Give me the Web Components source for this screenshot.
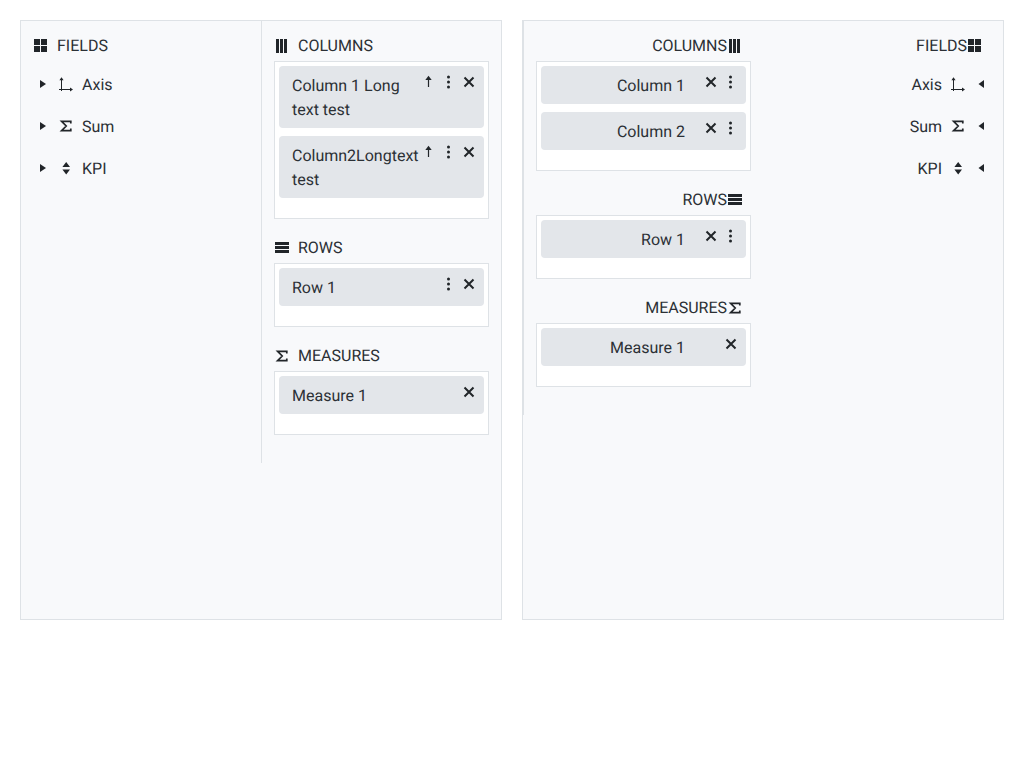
<!DOCTYPE html>
<html>
<head>
<meta charset="utf-8">
<title>Pivot</title>
<style>
  body { margin: 20px; font: 16px/24px Roboto, "Liberation Sans", sans-serif; color: #2b3035; background: #fff; text-rendering: geometricPrecision; }
</style>
</head>
<body>
<pivot-page>
  <pivot-board>
    <field-list title="FIELDS">
      <field-item icon="axis">Axis</field-item>
      <field-item icon="sum">Sum</field-item>
      <field-item icon="kpi">KPI</field-item>
    </field-list>
    <div slot="zones">
      <drop-zone title="COLUMNS" icon="columns">
        <pivot-chip buttons="up,menu,close">Column 1 Long text test</pivot-chip>
        <pivot-chip buttons="up,menu,close">Column2Longtext test</pivot-chip>
      </drop-zone>
      <drop-zone title="ROWS" icon="rows">
        <pivot-chip buttons="menu,close">Row 1</pivot-chip>
      </drop-zone>
      <drop-zone title="MEASURES" icon="sum">
        <pivot-chip buttons="close">Measure 1</pivot-chip>
      </drop-zone>
    </div>
  </pivot-board>
  <pivot-board flip>
    <field-list title="FIELDS" flip>
      <field-item icon="axis" flip>Axis</field-item>
      <field-item icon="sum" flip>Sum</field-item>
      <field-item icon="kpi" flip>KPI</field-item>
    </field-list>
    <div slot="zones">
      <drop-zone title="COLUMNS" icon="columns" flip>
        <pivot-chip buttons="close,menu" flip>Column 1</pivot-chip>
        <pivot-chip buttons="close,menu" flip>Column 2</pivot-chip>
      </drop-zone>
      <drop-zone title="ROWS" icon="rows" flip>
        <pivot-chip buttons="close,menu" flip>Row 1</pivot-chip>
      </drop-zone>
      <drop-zone title="MEASURES" icon="sum" flip>
        <pivot-chip buttons="close" flip>Measure 1</pivot-chip>
      </drop-zone>
    </div>
  </pivot-board>
</pivot-page>
<script>
// every icon sits in a 16x16 box
const ICONS = {
  fields: '<path d="M1 1h6v6H1zM8 1h6v6H8zM1 8h6v6H1zM8 8h6v6H8z"/>',
  columns: '<path d="M2 1h3v14H2zM6 1h3v14H6zM10 1h3v14h-3z"/>',
  rows: '<path d="M1 2h14v3H1zM1 6h14v3H1zM1 10h14v3H1z"/>',
  axis: '<path d="M3.5 3v12M1 13.5h12" fill="none" stroke="currentColor"/><path d="M3.5 1.2L1.4 4.2h4.2zM15 13.5l-3-2.1v4.2z"/>',
  sum: '<path d="M12.8 5.6V3.4H3.6L8.2 8l-4.6 4.6h9.2v-2.2" fill="none" stroke="currentColor" stroke-width="1.7"/>',
  kpi: '<path d="M8.2 2L12 7H4.4zM4.4 9.5H12L8.2 14.5z"/>',
  right: '<path d="M5 4l6 4-6 4z"/>',
  left: '<path d="M11 4L5.5 8l5.5 4z"/>',
  up: '<path d="M7.5 5v8" fill="none" stroke="currentColor" stroke-width="1.2"/><path d="M7.5 1.7L4.3 6h6.4z"/>',
  menu: '<circle cx="7.5" cy="3" r="1.5"/><circle cx="7.5" cy="8" r="1.5"/><circle cx="7.5" cy="13" r="1.5"/>',
  close: '<path d="M3.5 3.5l9 9M12.5 3.5l-9 9" fill="none" stroke="currentColor" stroke-width="2"/>'
};

class PivotIcon extends HTMLElement {
  constructor() {
    super();
    this.attachShadow({mode: "open"}).innerHTML =
      "<style>:host{display:block;width:16px;height:16px;flex:none;color:#212529}svg{display:block}</style>" +
      '<svg width="16" height="16" viewBox="0 0 16 16" fill="currentColor">' + ICONS[this.getAttribute("name")] + "</svg>";
  }
}

class PivotPage extends HTMLElement {
  constructor() {
    super();
    this.attachShadow({mode: "open"}).innerHTML =
      "<style>:host{display:flex;gap:20px;width:984px}</style><slot></slot>";
  }
}

class PivotBoard extends HTMLElement {
  constructor() {
    super();
    this.attachShadow({mode: "open"}).innerHTML = `<style>
      :host { display: flex; flex: 1 1 0; min-width: 0; height: 600px; box-sizing: border-box; border: 1px solid #dee2e6; background: #f8f9fb; align-items: flex-start; }
      :host([flip]) { flex-direction: row-reverse; }
      .zones { display: block; width: 240px; box-sizing: border-box; border-left: 1px solid #dee2e6; padding: 12px; }
      ::slotted(field-list) { width: 240px; }
    </style><slot></slot><div class="zones"><slot name="zones"></slot></div>`;
  }
}

class FieldList extends HTMLElement {
  constructor() {
    super();
    this.attachShadow({mode: "open"}).innerHTML = `<style>
      :host { display: block; box-sizing: border-box; padding-top: 12px; }
      .head { display: flex; align-items: center; box-sizing: border-box; height: 24px; padding: 2px 0 0 12px; gap: 8px; }
      :host([flip]) .head { flex-direction: row-reverse; gap: 0; padding: 2px 20px 0 0; }
      .items { display: flex; flex-direction: column; gap: 18px; margin-top: 15px; }
    </style>
    <div class="head"><pivot-icon name="fields"></pivot-icon><span>${this.getAttribute("title")}</span></div>
    <div class="items"><slot></slot></div>`;
    this.removeAttribute("title");
  }
}

class FieldItem extends HTMLElement {
  constructor() {
    super();
    const caret = this.hasAttribute("flip") ? "left" : "right";
    this.attachShadow({mode: "open"}).innerHTML = `<style>
      :host { display: flex; align-items: center; height: 24px; padding-left: 14px; }
      :host([flip]) { flex-direction: row-reverse; padding: 0 14px 0 0; }
      .icon { margin: 0 8px 0 7px; }
      :host([flip]) .icon { margin: 0 7px 0 8px; }
      span { margin-top: 2px; }
    </style>
    <pivot-icon name="${caret}"></pivot-icon>
    <pivot-icon class="icon" name="${this.getAttribute("icon")}"></pivot-icon>
    <span><slot></slot></span>`;
  }
}

class DropZone extends HTMLElement {
  constructor() {
    super();
    this.attachShadow({mode: "open"}).innerHTML = `<style>
      :host { display: block; margin-bottom: 16px; }
      .head { display: flex; align-items: center; box-sizing: border-box; height: 24px; padding-top: 2px; gap: 8px; margin-bottom: 4px; }
      :host([flip]) .head { flex-direction: row-reverse; gap: 0; padding-right: 8px; }
      .box { border: 1px solid #dee2e6; background: #fff; padding: 4px 4px 12px; }
    </style>
    <div class="head"><pivot-icon name="${this.getAttribute("icon")}"></pivot-icon><span>${this.getAttribute("title")}</span></div>
    <div class="box"><slot></slot></div>`;
    this.removeAttribute("title");
  }
}

class PivotChip extends HTMLElement {
  constructor() {
    super();
    const buttons = this.getAttribute("buttons").split(",")
      .map(b => `<pivot-icon class="btn" name="${b}"></pivot-icon>`).join("");
    this.attachShadow({mode: "open"}).innerHTML = `<style>
      :host { display: flex; align-items: flex-start; background: #e3e6ea; border-radius: 4px; margin-bottom: 8px; padding: 8px 5px 6px 13px; }
      .text { flex: 1; min-width: 0; }
      :host([flip]) .text { text-align: right; }
      .btns { display: flex; justify-content: flex-end; width: 61px; }
      :host([flip]) .btns { width: 56px; }
      .btn { margin: 0 2px; }
    </style><div class="text"><slot></slot></div><div class="btns">${buttons}</div>`;
  }
}

customElements.define("pivot-icon", PivotIcon);
customElements.define("pivot-page", PivotPage);
customElements.define("pivot-board", PivotBoard);
customElements.define("field-list", FieldList);
customElements.define("field-item", FieldItem);
customElements.define("drop-zone", DropZone);
customElements.define("pivot-chip", PivotChip);
</script>
</body>
</html>
